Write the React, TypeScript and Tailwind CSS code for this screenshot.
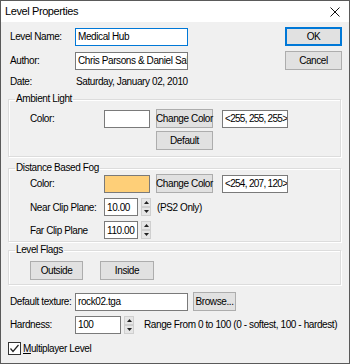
import React from 'react';

const font = { fontFamily: '"Liberation Sans", Arial, sans-serif' };

const Btn = ({ w, children, primary }: { w: string; children: React.ReactNode; primary?: boolean }) => (
  <div
    className={`${w} h-[19px] flex items-center justify-center bg-[#e1e1e1] text-black ${
      primary ? 'border border-[#0078d7] shadow-[inset_0_0_0_1px_#0078d7]' : 'border border-[#adadad]'
    }`}
  >
    {children}
  </div>
);

const Box = ({ w, children, focus }: { w: string; children?: React.ReactNode; focus?: boolean }) => (
  <div
    className={`${w} h-[18px] flex items-center bg-white px-[2px] text-black overflow-hidden border ${
      focus ? 'border-[#0078d7]' : 'border-[#7a7a7a]'
    }`}
  >
    {children}
  </div>
);

// read-only colour value field, a bit tighter so the whole triple fits
const ValueBox = ({ children }: { children: React.ReactNode }) => (
  <div className="w-[66px] h-[18px] flex items-center bg-white pl-[2px] text-black overflow-hidden border border-[#7a7a7a] tracking-[-0.7px]">
    {children}
  </div>
);

const Arrow = ({ up }: { up?: boolean }) => (
  <div className="h-[9px] w-[10px] flex items-center justify-center bg-[#e6e6e6] border border-[#cfcfcf]">
    <svg width="5" height="3" viewBox="0 0 5 3">
      {up ? <polygon points="0,3 5,3 2.5,0" fill="#222" /> : <polygon points="0,0 5,0 2.5,3" fill="#222" />}
    </svg>
  </div>
);

const Spin = ({ w, value }: { w: string; value: string }) => (
  <div className="flex items-center">
    <Box w={w}>{value}</Box>
    <div className="ml-[3px] flex flex-col">
      <Arrow up />
      <Arrow />
    </div>
  </div>
);

const Group = ({ title, children, className }: { title: string; children: React.ReactNode; className?: string }) => (
  <fieldset className={`border border-[#dcdcdc] shadow-[inset_1px_1px_0_#fff,1px_1px_0_#fff] mr-[1px] ${className ?? ''}`}>
    <legend className="ml-[6px] px-[1px] leading-[14px] text-black">{title}</legend>
    {children}
  </fieldset>
);

export default function App() {
  return (
    <div
      style={font}
      className="w-[350px] h-[364px] bg-[#f0f0f0] border border-[#5a5a5a] flex flex-col whitespace-nowrap text-[10px] tracking-[-0.4px]"
    >
      <div className="h-[21px] bg-white flex items-center justify-between pl-[4px] pr-[9px]">
        <span className="text-[11px] text-black">Level Properties</span>
        <svg width="10" height="10" viewBox="0 0 10 10">
          <path d="M0.5 0.5 L9.5 9.5 M9.5 0.5 L0.5 9.5" stroke="#111" strokeWidth="1" />
        </svg>
      </div>

      <div className="pl-[7px] pr-[7px] flex flex-col text-black">
        <div className="mt-[5px] flex items-center h-[19px]">
          <span className="w-[67px] pl-[2px]">Level Name:</span>
          <Box w="w-[113px]" focus>Medical Hub</Box>
          <div className="ml-auto">
            <Btn w="w-[57px]" primary>OK</Btn>
          </div>
        </div>
        <div className="mt-[5px] flex items-center h-[19px]">
          <span className="w-[67px] pl-[2px]">Author:</span>
          <Box w="w-[113px]">Chris Parsons &amp; Daniel Salazar</Box>
          <div className="ml-auto">
            <Btn w="w-[57px]">Cancel</Btn>
          </div>
        </div>
        <div className="mt-[4px] flex items-center h-[14px]">
          <span className="w-[68px] pl-[2px]">Date:</span>
          <span>Saturday, January 02, 2010</span>
        </div>

        <Group title="Ambient Light" className="mt-[4px] pb-[6px]">
          <div className="mt-[3px] flex items-center">
            <span className="w-[95px] pl-[21px]">Color:</span>
            <div className="w-[46px] h-[18px] bg-white border border-[#7a7a7a]" />
            <div className="ml-[6px]">
              <Btn w="w-[57px]">Change Color</Btn>
            </div>
            <div className="ml-[9px]">
              <ValueBox>&lt;255, 255, 255&gt;</ValueBox>
            </div>
          </div>
          <div className="mt-[3px] flex">
            <div className="ml-[147px]">
              <Btn w="w-[57px]">Default</Btn>
            </div>
          </div>
        </Group>

        <Group title="Distance Based Fog" className="mt-[4px] pb-[2px]">
          <div className="-mt-[1px] flex items-center">
            <span className="w-[95px] pl-[21px]">Color:</span>
            <div className="w-[46px] h-[18px] bg-[#fecf78] border border-[#7a7a7a]" />
            <div className="ml-[6px]">
              <Btn w="w-[57px]">Change Color</Btn>
            </div>
            <div className="ml-[9px]">
              <ValueBox>&lt;254, 207, 120&gt;</ValueBox>
            </div>
          </div>
          <div className="mt-[5px] flex items-center">
            <span className="w-[95px] pl-[21px]">Near Clip Plane:</span>
            <Spin w="w-[34px]" value="10.00" />
            <span className="ml-[6px]">(PS2 Only)</span>
          </div>
          <div className="mt-[5px] flex items-center">
            <span className="w-[95px] pl-[21px]">Far Clip Plane</span>
            <Spin w="w-[34px]" value="110.00" />
          </div>
        </Group>

        <Group title="Level Flags" className="mt-[1px] pb-[4px]">
          <div className="mt-[4px] flex items-center">
            <div className="ml-[21px]">
              <Btn w="w-[53px]">Outside</Btn>
            </div>
            <div className="ml-[17px]">
              <Btn w="w-[54px]">Inside</Btn>
            </div>
          </div>
        </Group>

        <div className="mt-[7px] flex items-center h-[19px]">
          <span className="w-[67px] pl-[2px]">Default texture:</span>
          <Box w="w-[113px]">rock02.tga</Box>
          <div className="ml-[5px]">
            <Btn w="w-[43px]">Browse...</Btn>
          </div>
        </div>
        <div className="mt-[4px] flex items-center h-[19px]">
          <span className="w-[67px] pl-[2px]">Hardness:</span>
          <Spin w="w-[46px]" value="100" />
          <span className="ml-[10px]">Range From 0 to 100 (0 - softest, 100 - hardest)</span>
        </div>
        <div className="mt-[7px] flex items-center">
          <div className="w-[13px] h-[13px] bg-white border border-[#333] flex items-center justify-center">
            <svg width="11" height="11" viewBox="0 0 11 11">
              <polyline points="1.5,5.5 4,8.5 9.5,2" fill="none" stroke="#222" strokeWidth="1.2" />
            </svg>
          </div>
          <span className="ml-[2px]">
            <span className="underline">M</span>ultiplayer Level
          </span>
        </div>
      </div>
    </div>
  );
}
